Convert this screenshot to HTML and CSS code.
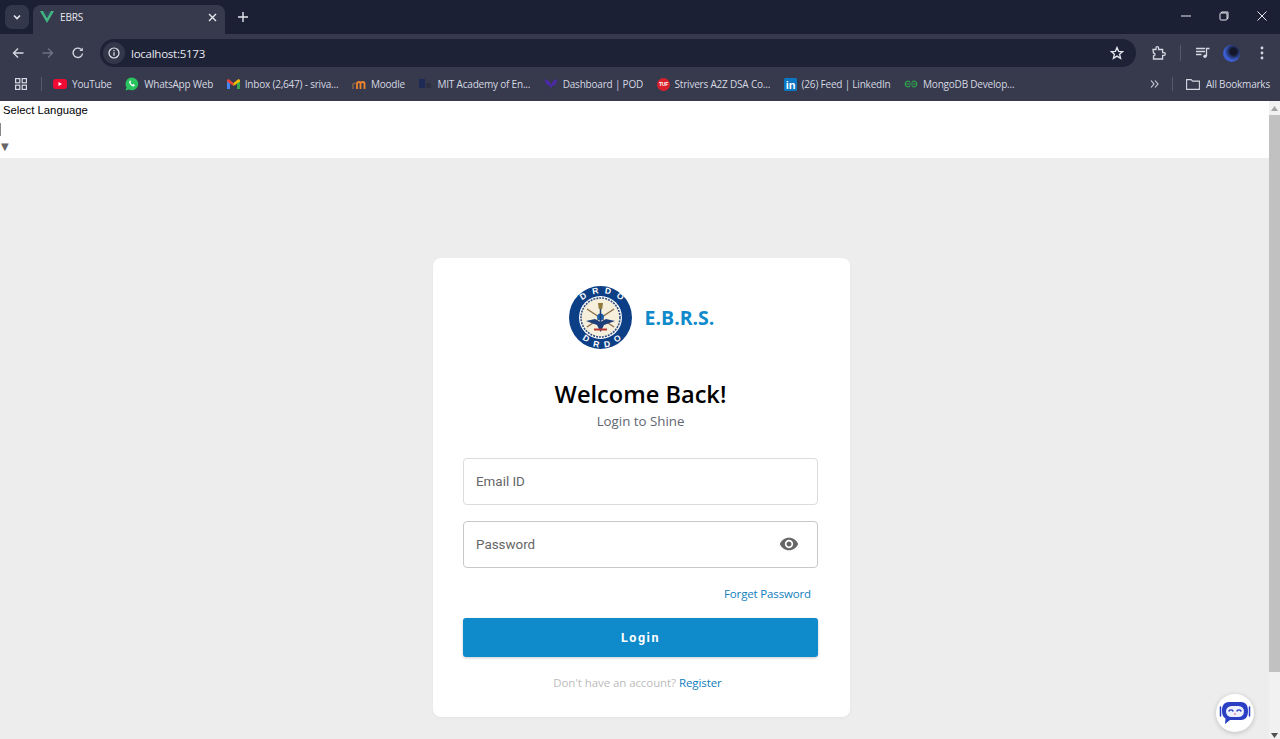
FILE: index.html
```html
<!DOCTYPE html>
<html lang="en">
<head>
    <meta charset="UTF-8">
    <meta name="viewport" content="width=device-width, initial-scale=1.0">
    <title>EBRS</title>
    <link rel="stylesheet" href="styles.css">
</head>
<body>
    <!-- browser chrome -->
    <div class="tab-strip">
        <button class="tab-search">
            <svg width="10" height="10" viewBox="0 0 10 10"><path d="M2 3.5 5 6.5 8 3.5" fill="none" stroke="#e6e8ef" stroke-width="1.6"/></svg>
        </button>
        <div class="tab">
            <svg width="14" height="12" viewBox="0 0 14 12"><path d="M0 0h3l4 7 4-7h3L7 12z" fill="#41b883"/><path d="M3 0h2.400L7 3 8.600 0H11L7 7z" fill="#35495e"/></svg>
            <span class="tab-title">EBRS</span>
            <svg class="tab-close" width="9" height="9" viewBox="0 0 9 9"><path d="M1 1 8 8M8 1 1 8" stroke="#e6e8ef" stroke-width="1.4"/></svg>
        </div>
        <svg class="new-tab" width="10" height="10" viewBox="0 0 10 10"><path d="M5 0v10M0 5h10" stroke="#e6e8ef" stroke-width="1.400"/></svg>
        <div class="window-controls">
            <svg width="10" height="10" viewBox="0 0 10 10"><path d="M0 5h10" stroke="#e6e8ef"/></svg>
            <svg width="10" height="10" viewBox="0 0 10 10"><path d="M2.500 2V1h6.500v6.500H8" fill="none" stroke="#e6e8ef"/><rect x="1" y="2" width="7" height="7" rx="1" fill="none" stroke="#e6e8ef"/></svg>
            <svg width="10" height="10" viewBox="0 0 10 10"><path d="M0.500 0.500 9.500 9.500M9.500 0.500 0.500 9.500" stroke="#e6e8ef"/></svg>
        </div>
    </div>

    <div class="toolbar">
        <svg width="12" height="12" viewBox="0 0 12 12"><path d="M11.500 6H1.500M6 1.500 1.500 6 6 10.500" fill="none" stroke="#d5d8e2" stroke-width="1.400"/></svg>
        <svg width="12" height="12" viewBox="0 0 12 12"><path d="M.5 6h10M6 1.500 10.500 6 6 10.500" fill="none" stroke="#6d7182" stroke-width="1.400"/></svg>
        <svg width="12" height="12" viewBox="0 0 12 12"><path d="M10.500 6.500A4.700 4.700 0 1 1 9 2.300" fill="none" stroke="#d5d8e2" stroke-width="1.400"/><path d="M10.800 .5v3.500H7.300z" fill="#d5d8e2"/></svg>
        <div class="omnibox">
            <span class="site-info">
                <svg width="12" height="12" viewBox="0 0 12 12"><circle cx="6" cy="6" r="5" fill="none" stroke="#e6e8ef" stroke-width="1.200"/><path d="M6 5.200v3.600M6 3v1.300" stroke="#e6e8ef" stroke-width="1.200"/></svg>
            </span>
            <span class="url">localhost:5173</span>
            <svg class="star" width="14" height="14" viewBox="0 0 14 14"><path d="M7 1.500 8.600 5.300l4.100.3-3.100 2.700 1 4-3.600-2.200-3.600 2.200 1-4L1.300 5.600l4.100-.3z" fill="none" stroke="#e6e8ef" stroke-width="1.300"/></svg>
        </div>
        <svg class="puzzle" width="14" height="14" viewBox="0 0 14 14"><path d="M1 3.500h3V2a1.300 1.300 0 0 1 2.600 0v1.500h4v3.200H12a1.300 1.300 0 0 1 0 2.600h-1.400v3.700H1.500V10a1.300 1.300 0 0 0 0-3z" fill="none" stroke="#d5d8e2" stroke-width="1.300"/></svg>
        <span class="divider"></span>
        <svg class="media" width="14" height="12" viewBox="0 0 14 12"><path d="M0 1.500h9M0 4.500h9M0 7.500h5.500" stroke="#d5d8e2" stroke-width="1.300"/><path d="M10.500 9V1.500h3" fill="none" stroke="#d5d8e2" stroke-width="1.300"/><circle cx="9" cy="9.300" r="1.700" fill="#d5d8e2"/></svg>
        <span class="avatar"></span>
        <svg class="kebab" width="4" height="14" viewBox="0 0 4 14"><circle cx="2" cy="2" r="1.400" fill="#d5d8e2"/><circle cx="2" cy="7" r="1.400" fill="#d5d8e2"/><circle cx="2" cy="12" r="1.400" fill="#d5d8e2"/></svg>
    </div>

    <div class="bookmarks">
        <svg class="apps" width="12" height="12" viewBox="0 0 12 12"><g fill="none" stroke="#d5d8e2" stroke-width="1.200"><rect x=".6" y=".6" width="4.200" height="4.200"/><rect x="7.200" y=".6" width="4.200" height="4.200"/><rect x=".6" y="7.200" width="4.200" height="4.200"/><rect x="7.200" y="7.200" width="4.200" height="4.200"/></g></svg>
        <span class="divider"></span>
        <a class="bookmark">
            <svg width="14" height="10" viewBox="0 0 14 10"><rect width="14" height="10" rx="3" fill="#f00b35"/><path d="M5.500 3v4L9 5z" fill="#fff"/></svg>
            YouTube
        </a>
        <a class="bookmark">
            <svg width="14" height="14" viewBox="0 0 14 14"><path d="M7 .5a6.400 6.400 0 0 0-5.500 9.700L.5 13.500l3.400-.9A6.400 6.400 0 1 0 7 .5z" fill="#29c45f"/><path d="M4.800 3.800c-1 1-.7 2.600.6 4s2.900 2.100 4 1.200l.5-1-1.600-.9-.7.700c-.8-.3-1.600-1.100-2-2l.6-.7-.8-1.600z" fill="#fff"/></svg>
            WhatsApp Web
        </a>
        <a class="bookmark">
            <svg width="13" height="10" viewBox="0 0 13 10"><path d="M0 1v9h3V3.500z" fill="#4285f4"/><path d="M13 1v9h-3V3.500z" fill="#34a853"/><path d="M0 1 1.500 0 6.500 4 6.500 7 0 2.500z" fill="#ea4335"/><path d="M13 1 11.500 0 6.500 4 6.500 7 13 2.500z" fill="#fbbc04"/></svg>
            Inbox (2,647) - sriva...
        </a>
        <a class="bookmark">
            <svg width="14" height="10" viewBox="0 0 14 10"><path d="M5 10V4.500c0-2 3.500-2 3.500 0V10M8.500 10V4.500c0-2 4-2 4 0V10" fill="none" stroke="#f0842c" stroke-width="1.800"/><path d="M1 10V5l3-1" fill="none" stroke="#8d6a4c" stroke-width="1.300"/></svg>
            Moodle
        </a>
        <a class="bookmark">
            <svg width="14" height="12" viewBox="0 0 14 12"><rect x="1" y="1" width="6" height="9" fill="#1d2a55"/><rect x="8" y="5" width="5" height="5" fill="#2c3040"/></svg>
            MIT Academy of En...
        </a>
        <a class="bookmark">
            <svg width="14" height="10" viewBox="0 0 14 10"><path d="M0 0 5 2 7 6 9 2 14 0 11 6 8 7 7 10 6 7 3 6z" fill="#4a2aa8"/></svg>
            Dashboard | POD
        </a>
        <a class="bookmark">
            <svg width="13" height="13" viewBox="0 0 13 13"><circle cx="6.500" cy="6.500" r="6.500" fill="#d8202c"/><text x="6.500" y="8.300" class="tuf-text">TUF</text></svg>
            Strivers A2Z DSA Co...
        </a>
        <a class="bookmark">
            <svg width="13" height="13" viewBox="0 0 13 13"><rect width="13" height="13" rx="1.500" fill="#0a77c4"/><text x="6.500" y="10.500" class="in-text">in</text></svg>
            (26) Feed | LinkedIn
        </a>
        <a class="bookmark">
            <svg width="14" height="8" viewBox="0 0 14 8"><path d="M7 4H1.200a2.700 2.700 0 0 1 5-1.500M7 4h5.800a2.700 2.700 0 0 0-5-1.500M1.200 4a2.700 2.700 0 0 0 5 1.500M12.800 4a2.700 2.700 0 0 1-5 1.500" fill="none" stroke="#2f9e4c" stroke-width="1.200"/></svg>
            MongoDB Develop...
        </a>
        <svg class="chevrons" width="9" height="8" viewBox="0 0 9 8"><path d="M1 .5 4 4 1 7.500M5 .5 8 4 5 7.500" fill="none" stroke="#d5d8e2" stroke-width="1.100"/></svg>
        <span class="divider"></span>
        <a class="bookmark all-bookmarks">
            <svg width="14" height="11" viewBox="0 0 14 11"><path d="M.6.6h4.500l1.500 1.500h6.800v8.300H.6z" fill="none" stroke="#d5d8e2" stroke-width="1.100"/></svg>
            All Bookmarks
        </a>
    </div>

    <!-- page -->
    <div class="viewport">
        <div class="page">
            <div class="language-bar">
                <div class="language-label">Select Language</div>
                <span class="language-cursor"></span>
                <div class="language-arrow">▼</div>
            </div>
            <main class="login-page">
                <div class="login-card">
                    <div class="brand">
                        <svg class="brand-logo" width="63" height="63" viewBox="0 0 63 63">
                            <circle cx="31.500" cy="31.500" r="31.500" fill="#0d3f86"/>
                            <circle cx="31.500" cy="31.500" r="21.500" fill="#fff"/>
                            <circle cx="31.500" cy="31.500" r="19.500" fill="#f6efdc" stroke="#33507f" stroke-width="1.600" stroke-dasharray="2 1"/>
                            <text class="logo-letter" x="15.700" y="12.700" transform="rotate(-32 15.700 12.700)">D</text>
                            <text class="logo-letter" x="26.700" y="7.700" transform="rotate(-10 26.700 7.700)">R</text>
                            <text class="logo-letter" x="38.500" y="7.700" transform="rotate(10 38.500 7.700)">D</text>
                            <text class="logo-letter" x="49.700" y="12.700" transform="rotate(32 49.700 12.700)">O</text>
                            <text class="logo-letter" x="15.700" y="55" transform="rotate(32 15.700 55)">D</text>
                            <text class="logo-letter" x="26.700" y="61" transform="rotate(10 26.700 61)">R</text>
                            <text class="logo-letter" x="38.500" y="61" transform="rotate(-10 38.500 61)">D</text>
                            <text class="logo-letter" x="49.700" y="55" transform="rotate(-32 49.700 55)">O</text>
                            <path d="M18 23 45 41M45 23 18 41" stroke="#8a6a44" stroke-width="1.300"/>
                            <path d="M17 35 28 39 31.500 46 35 39 46 35 37 33 31.500 36 26 33z" fill="#1f3f7a"/>
                            <path d="M29 17h5l-.8 6h-3.400z" fill="#8f7a3c"/>
                            <circle cx="31.500" cy="31" r="3.500" fill="#1f5fa8"/>
                            <path d="M31.500 23v18" stroke="#1f3f7a" stroke-width="1.500"/>
                            <path d="M25 43.500h13" stroke="#b6342c" stroke-width="2"/>
                        </svg>
                        <span class="brand-name">E.B.R.S.</span>
                    </div>
                    <h1 class="welcome">Welcome Back!</h1>
                    <p class="tagline">Login to Shine</p>

                    <div class="field field-email">
                        <span class="field-label">Email ID</span>
                    </div>
                    <div class="field field-password">
                        <span class="field-label">Password</span>
                        <svg class="eye" width="20" height="20" viewBox="0 0 24 24"><path d="M12 4.500C7 4.500 2.730 7.610 1 12c1.730 4.390 6 7.500 11 7.500s9.270-3.110 11-7.500c-1.730-4.390-6-7.500-11-7.500zM12 17c-2.760 0-5-2.240-5-5s2.240-5 5-5 5 2.240 5 5-2.240 5-5 5zm0-8c-1.660 0-3 1.340-3 3s1.340 3 3 3 3-1.340 3-3-1.340-3-3-3z" fill="#666"/></svg>
                    </div>

                    <div class="forget-row"><a class="link">Forget Password</a></div>
                    <button class="login-btn">Login</button>
                    <p class="register">Don't have an account? <a class="link">Register</a></p>
                </div>
            </main>
        </div>
        <div class="scrollbar">
            <svg width="7" height="5" viewBox="0 0 7 5"><path d="M3.500 0 7 5H0z" fill="#a3a3a3"/></svg>
            <span class="scroll-thumb"></span>
            <svg class="scroll-down" width="7" height="5" viewBox="0 0 7 5"><path d="M0 0h7L3.500 5z" fill="#505050"/></svg>
        </div>
        <button class="chat-btn">
            <svg width="32" height="30" viewBox="0 0 32 30">
                <path d="M1.500 9v9M30.500 9v9" stroke="#2a3fc4" stroke-width="1.500" stroke-linecap="round"/>
                <path d="M10 4h12c5 0 7 3.500 7 9s-2 9-7 9H11l-5 4 .5-5.500C4 19 3 16.500 3 13c0-5.500 2-9 7-9z" fill="#2a3fc4"/>
                <rect x="7" y="8" width="18" height="11" rx="5.500" fill="#eef0fb"/>
                <path d="M10 13c1-1.500 3-1.500 4 0M18 13c1-1.500 3-1.500 4 0" fill="none" stroke="#2a3fc4" stroke-width="1.400" stroke-linecap="round"/>
                <path d="M15 16h2" stroke="#d4588a" stroke-width="1.200"/>
            </svg>
        </button>
    </div>
</body>
</html>
```
FILE: styles.css
```css
* {
    margin: 0;
    padding: 0;
    box-sizing: border-box;
}

html, body {
    height: 100%;
    overflow: hidden;
}

body {
    display: flex;
    flex-direction: column;
    font-family: 'Open Sans', 'Noto Sans', sans-serif;
    background: #ededed;
}

/* tab strip */
.tab-strip {
    height: 34px;
    flex: none;
    display: flex;
    align-items: flex-end;
    background: #1b2034;
    padding-left: 5px;
}

.tab-search {
    width: 24px;
    height: 24px;
    margin-bottom: 5px;
    border: none;
    border-radius: 7px;
    background: #33374a;
    display: flex;
    align-items: center;
    justify-content: center;
}

.tab {
    width: 192px;
    height: 29px;
    margin-left: 4px;
    padding: 0 7px 5px;
    display: flex;
    align-items: center;
    border-radius: 8px 8px 0 0;
    background: #373a4c;
}

.tab-title {
    margin-left: 6px;
    flex: 1;
    font-size: 10px;
    letter-spacing: -0.15px;
    color: #e6e8ef;
}

.tab-close {
    margin-right: 1px;
}

.new-tab {
    margin: 0 0 12px 13px;
}

.window-controls {
    margin-left: auto;
    height: 34px;
    padding: 0 13px 2px 0;
    display: flex;
    align-items: center;
    gap: 28px;
}

/* toolbar */
.toolbar {
    height: 38px;
    flex: none;
    display: flex;
    align-items: center;
    padding-left: 12px;
    background: #373a4c;
    gap: 18px;
}

.toolbar svg {
    flex: none;
}

.omnibox {
    width: 1036px;
    height: 28px;
    margin-left: -2px;
    flex: none;
    display: flex;
    align-items: center;
    border-radius: 14px;
    background: #1e2236;
}

.site-info {
    width: 22px;
    height: 22px;
    margin-left: 3px;
    border-radius: 50%;
    background: #33374a;
    display: flex;
    align-items: center;
    justify-content: center;
}

.url {
    margin-left: 6px;
    flex: 1;
    font-size: 11.500px;
    letter-spacing: -0.25px;
    color: #e6e8ef;
}

.star {
    margin-right: 12px;
}

.puzzle {
    margin-left: -2px;
}

.toolbar .divider {
    margin-left: -4px;
    height: 16px;
}

.media {
    margin-left: -3px;
}

.avatar {
    width: 17px;
    height: 17px;
    margin-left: -5px;
    flex: none;
    border-radius: 50%;
    background: radial-gradient(circle at 62% 38%, #14172a 22%, #3f63dc 62%, #1c2a70);
}

.kebab {
    margin-left: 2px;
}

.divider {
    width: 1px;
    height: 14px;
    flex: none;
    background: #55596b;
}

/* bookmarks */
.bookmarks {
    height: 29px;
    flex: none;
    display: flex;
    align-items: center;
    padding: 0 10px 5px 15px;
    background: #373a4c;
    font-size: 10px;
    letter-spacing: -0.2px;
    color: #d5d8e2;
}

.bookmarks svg {
    flex: none;
}

.bookmarks .apps {
    margin-right: 14px;
}

.bookmarks > .divider {
    margin-right: 11px;
}

.bookmark {
    display: flex;
    align-items: center;
    gap: 5px;
    margin-right: 13.500px;
    white-space: nowrap;
}

.chevrons {
    margin-left: auto;
    margin-right: 13px;
}

.all-bookmarks {
    margin: 0 0 0 2px;
    gap: 6px;
}

.tuf-text {
    font-family: 'Liberation Sans', sans-serif;
    font-size: 5px;
    font-weight: bold;
    fill: #fff;
    text-anchor: middle;
}

.in-text {
    font-family: 'Liberation Sans', sans-serif;
    font-size: 11px;
    font-weight: bold;
    fill: #fff;
    text-anchor: middle;
}

/* page */
.viewport {
    flex: 1;
    min-height: 0;
    display: flex;
    position: relative;
}

.page {
    flex: 1;
    min-width: 0;
    display: flex;
    flex-direction: column;
}

.language-bar {
    height: 57px;
    flex: none;
    background: #fff;
    box-shadow: 0 1px 1px rgba(0, 0, 0, 0.05);
    font-family: 'Liberation Sans', Arial, sans-serif;
    color: #000;
}

.language-label {
    padding: 2px 0 0 3px;
    font-size: 11.300px;
    line-height: 15px;
}

.language-cursor {
    display: block;
    width: 1px;
    height: 13px;
    margin-top: 5px;
    background: #888;
}

.language-arrow {
    margin-top: 3px;
    padding-left: 1px;
    font-family: 'DejaVu Sans', sans-serif;
    font-size: 10px;
    line-height: 15px;
    color: #666;
}

.login-page {
    flex: 1;
    min-height: 0;
    padding: 100px 0 0 14px;
    display: flex;
    justify-content: center;
    background: #ededed;
}

.login-card {
    width: 417px;
    height: 459px;
    padding: 28px 32px 0 30px;
    border-radius: 8px;
    background: #fff;
    box-shadow: 0 1px 3px rgba(0, 0, 0, 0.04);
}

.brand {
    display: flex;
    align-items: center;
    justify-content: center;
    gap: 13px;
    margin-left: 2px;
}

.brand-logo {
    display: block;
}

.logo-letter {
    font-family: 'Liberation Sans', sans-serif;
    font-size: 8.500px;
    font-weight: bold;
    fill: #fff;
    text-anchor: middle;
}

.brand-name {
    font-size: 19.500px;
    font-weight: 700;
    color: #0f8aca;
}

.welcome {
    margin-top: 28px;
    font-size: 23.600px;
    line-height: 34px;
    font-weight: 600;
    text-align: center;
    color: #000;
}

.tagline {
    font-size: 13.300px;
    line-height: 20px;
    font-weight: 500;
    text-align: center;
    color: #5f6672;
}

.field {
    height: 47px;
    padding: 0 18px 1px 12px;
    display: flex;
    align-items: center;
    justify-content: space-between;
    border: 1px solid #c8c8c8;
    border-radius: 4px;
    font-family: Roboto, sans-serif;
    font-size: 13.400px;
    color: #666;
}

.field-email {
    margin-top: 27px;
    border-color: #dcdcdc;
}

.field-password {
    margin-top: 16px;
}

.forget-row {
    margin-top: 17px;
    padding-right: 7px;
    text-align: right;
    font-size: 11.500px;
    letter-spacing: -0.15px;
    line-height: 18px;
}

.link {
    color: #0f80bd;
    font-weight: 500;
}

.login-btn {
    display: block;
    width: 100%;
    height: 39px;
    margin-top: 15px;
    border: none;
    border-radius: 3px;
    background: #0f8aca;
    box-shadow: 0 1px 3px rgba(0, 0, 0, 0.2);
    font-family: Roboto, sans-serif;
    font-size: 12.500px;
    font-weight: 700;
    letter-spacing: 1.500px;
    color: #fff;
}

.register {
    margin-top: 17px;
    padding-right: 6px;
    font-size: 11.500px;
    letter-spacing: -0.08px;
    line-height: 18px;
    text-align: center;
    color: #bcbcbc;
}

/* scrollbar */
.scrollbar {
    width: 11px;
    flex: none;
    display: flex;
    flex-direction: column;
    align-items: center;
    padding-top: 5px;
    background: #f1f1f1;
}

.scroll-thumb {
    width: 100%;
    height: 557px;
    margin-top: 4px;
    background: #c1c1c1;
}

.scroll-down {
    margin-top: auto;
    margin-bottom: 1px;
}

/* chat button floats over the page */
.chat-btn {
    position: absolute;
    right: 26px;
    bottom: 7px;
    width: 38px;
    height: 38px;
    border: none;
    border-radius: 50%;
    background: #fff;
    box-shadow: 0 1px 5px rgba(0, 0, 0, 0.2);
    display: flex;
    align-items: center;
    justify-content: center;
}
```
